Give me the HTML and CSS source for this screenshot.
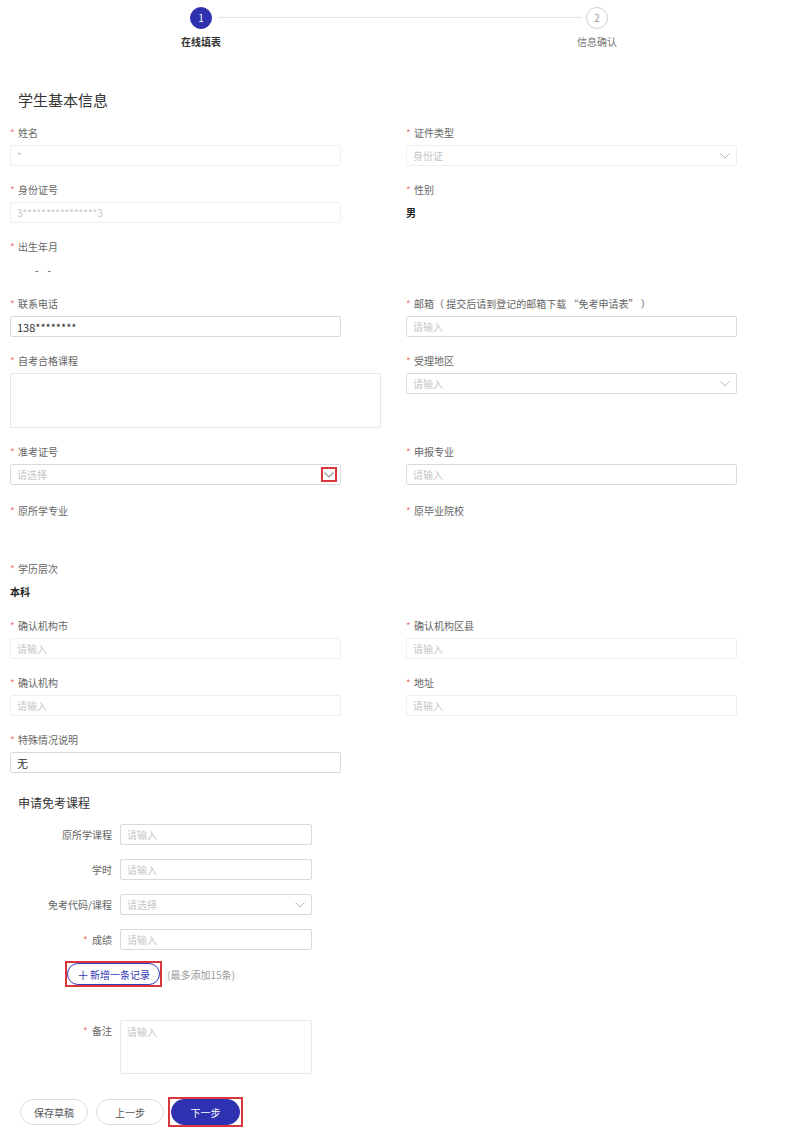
FILE: index.html
```html
<!DOCTYPE html>
<html lang="zh-CN">
<head>
<meta charset="utf-8">
<title>在线填表</title>
<link rel="stylesheet" href="styles.css">
</head>
<body>
<div class="page">
  <div class="stepper">
    <div class="step active"><div class="dot">1</div><div class="step-label">在线填表</div></div>
    <div class="connector"></div>
    <div class="step"><div class="dot">2</div><div class="step-label">信息确认</div></div>
  </div>

  <h2 class="section-title">学生基本信息</h2>

  <div class="form-grid">
    <div class="item">
      <div class="label"><span class="req">*</span>姓名</div>
      <div class="input disabled"><span class="ph">*</span></div>
    </div>
    <div class="item">
      <div class="label"><span class="req">*</span>证件类型</div>
      <div class="input disabled"><span class="ph">身份证</span><svg class="chev" viewBox="0 0 10 6"><path d="M0.5 0.5 L5 5 L9.5 0.5"/></svg></div>
    </div>

    <div class="item">
      <div class="label"><span class="req">*</span>身份证号</div>
      <div class="input disabled"><span class="ph">3****************3</span></div>
    </div>
    <div class="item">
      <div class="label"><span class="req">*</span>性别</div>
      <div class="value">男</div>
    </div>

    <div class="item">
      <div class="label"><span class="req">*</span>出生年月</div>
      <div class="value date">-&nbsp;&nbsp;&nbsp;&nbsp;-</div>
    </div>
    <div class="item"></div>

    <div class="item">
      <div class="label"><span class="req">*</span>联系电话</div>
      <div class="input"><span class="txt">138********</span></div>
    </div>
    <div class="item">
      <div class="label"><span class="req">*</span>邮箱（ 提交后请到登记的邮箱下载 “免考申请表” ）</div>
      <div class="input"><span class="ph">请输入</span></div>
    </div>

    <div class="item">
      <div class="label"><span class="req">*</span>自考合格课程</div>
      <div class="textarea wide"></div>
    </div>
    <div class="item">
      <div class="label"><span class="req">*</span>受理地区</div>
      <div class="input"><span class="ph">请输入</span><svg class="chev" viewBox="0 0 10 6"><path d="M0.5 0.5 L5 5 L9.5 0.5"/></svg></div>
    </div>

    <div class="item extra2">
      <div class="label"><span class="req">*</span>准考证号</div>
      <div class="input"><span class="ph">请选择</span><span class="arrow-hl"><svg class="chev hl" viewBox="0 0 10 6"><path d="M0.5 0.5 L5 5 L9.5 0.5"/></svg></span></div>
    </div>
    <div class="item extra2">
      <div class="label"><span class="req">*</span>申报专业</div>
      <div class="input"><span class="ph">请输入</span></div>
    </div>

    <div class="item extra1">
      <div class="label"><span class="req">*</span>原所学专业</div>
      <div class="value"></div>
    </div>
    <div class="item extra1">
      <div class="label"><span class="req">*</span>原毕业院校</div>
      <div class="value"></div>
    </div>

    <div class="item">
      <div class="label"><span class="req">*</span>学历层次</div>
      <div class="value">本科</div>
    </div>
    <div class="item"></div>

    <div class="item">
      <div class="label"><span class="req">*</span>确认机构市</div>
      <div class="input disabled"><span class="ph">请输入</span></div>
    </div>
    <div class="item">
      <div class="label"><span class="req">*</span>确认机构区县</div>
      <div class="input disabled"><span class="ph">请输入</span></div>
    </div>

    <div class="item">
      <div class="label"><span class="req">*</span>确认机构</div>
      <div class="input disabled"><span class="ph">请输入</span></div>
    </div>
    <div class="item">
      <div class="label"><span class="req">*</span>地址</div>
      <div class="input disabled"><span class="ph">请输入</span></div>
    </div>

    <div class="item last">
      <div class="label"><span class="req">*</span>特殊情况说明</div>
      <div class="input"><span class="txt">无</span></div>
    </div>
    <div class="item last"></div>
  </div>

  <div class="sub">
    <h3 class="sub-title">申请免考课程</h3>
    <div class="sub-form">
      <div class="sub-label">原所学课程</div>
      <div class="input small"><span class="ph">请输入</span></div>
      <div class="sub-label">学时</div>
      <div class="input small"><span class="ph">请输入</span></div>
      <div class="sub-label">免考代码/课程</div>
      <div class="input small"><span class="ph">请选择</span><svg class="chev" viewBox="0 0 10 6"><path d="M0.5 0.5 L5 5 L9.5 0.5"/></svg></div>
      <div class="sub-label"><span class="req">*</span>成绩</div>
      <div class="input small"><span class="ph">请输入</span></div>
    </div>

    <div class="add-row">
      <span class="hl-box"><span class="add-btn"><span class="plus">＋</span>新增一条记录</span></span>
      <span class="hint">(最多添加15条)</span>
    </div>

    <div class="sub-form remark">
      <div class="sub-label top"><span class="req">*</span>备注</div>
      <div class="textarea small"><span class="ph">请输入</span></div>
    </div>

    <div class="actions">
      <span class="btn">保存草稿</span>
      <span class="btn">上一步</span>
      <span class="hl-box next-wrap"><span class="btn primary">下一步</span></span>
    </div>
  </div>
</div>
</body>
</html>
```

FILE: styles.css
```css
* { box-sizing: border-box; }

body {
  margin: 0;
  background: #fff;
  color: #333;
  font-family: "Noto Sans CJK SC", "Noto Sans", sans-serif;
}

.page {
  width: 800px;
  min-height: 1139px;
  padding-bottom: 10px;
}

/* stepper */
.stepper {
  display: flex;
  margin-left: 179px;
  width: 440px;
  padding-top: 7px;
}
.step {
  width: 44px;
  display: flex;
  flex-direction: column;
  align-items: center;
}
.dot {
  width: 22px;
  height: 22px;
  border-radius: 50%;
  border: 1px solid #d0d0d0;
  color: #999;
  font-size: 10px;
  line-height: 20px;
  text-align: center;
  background: #fff;
}
.step.active .dot {
  background: #2e31ae;
  border-color: #2e31ae;
  color: #fff;
}
.step-label {
  margin-top: 6px;
  font-size: 10px;
  line-height: 14px;
  white-space: nowrap;
  color: #777;
}
.step.active .step-label {
  color: #333;
  font-weight: bold;
}
.connector {
  flex: 1;
  height: 1px;
  background: #e3e3e3;
  margin: 10px -7px 0 -5px;
}

.section-title {
  margin: 41px 0 0 18px;
  font-size: 15px;
  line-height: 20px;
  font-weight: normal;
  color: #333;
}

/* main form */
.form-grid {
  margin-top: 16px;
  padding-left: 10px;
  display: grid;
  grid-template-columns: 396px 331px;
  align-items: start;
}
.item {
  margin-bottom: 17px;
}
.item.extra2 { margin-bottom: 19px; }
.item.extra1 { margin-bottom: 18px; }
.item.last { margin-bottom: 0; }

.label {
  font-size: 10px;
  line-height: 14px;
  height: 14px;
  color: #666;
  white-space: nowrap;
  margin-bottom: 5px;
}
.req {
  display: inline-block;
  width: 8px;
  color: #f07c7c;
  font-size: 10px;
}

.input {
  width: 331px;
  height: 21px;
  border: 1px solid #dadada;
  border-radius: 2px;
  padding: 0 6px;
  display: flex;
  align-items: center;
  justify-content: space-between;
  font-size: 10px;
  background: #fff;
}
.input.disabled {
  border-color: #efefef;
}
.input.small {
  width: 192px;
}
.ph {
  color: #c6c6c6;
  font-size: 10px;
}
.txt {
  color: #333;
  font-size: 11px;
}
.chev {
  width: 10px;
  height: 6px;
  fill: none;
  stroke: #b8b8b8;
  stroke-width: 1;
}
.arrow-hl {
  width: 16px;
  height: 15px;
  border: 2px solid #d8363a;
  display: flex;
  align-items: center;
  justify-content: center;
  margin-right: -3px;
}
.chev.hl {
  width: 10px;
  height: 6px;
  stroke: #999;
  stroke-width: 1.2;
  flex: none;
}

.textarea {
  border: 1px solid #e8e8e8;
  border-radius: 2px;
  background: #fff;
}
.textarea.wide {
  width: 371px;
  height: 55px;
}

.value {
  height: 21px;
  line-height: 21px;
  font-size: 10px;
  font-weight: bold;
  color: #222;
}
.value.date {
  padding-left: 25px;
  font-weight: normal;
  color: #444;
}

/* sub section */
.sub {
  padding-left: 10px;
}
.sub-title {
  margin: 22px 0 13px 8px;
  font-size: 12px;
  line-height: 16px;
  font-weight: normal;
  color: #333;
}
.sub-form {
  display: grid;
  grid-template-columns: 102px 192px;
  column-gap: 8px;
  row-gap: 14px;
  align-items: center;
}
.sub-label {
  text-align: right;
  font-size: 10px;
  line-height: 14px;
  color: #666;
  white-space: nowrap;
}
.sub-label .req {
  width: 9px;
  text-align: left;
}
.sub-label.top {
  align-self: start;
  padding-top: 4px;
}

.add-row {
  margin-top: 11px;
  padding-left: 55px;
  display: flex;
  align-items: center;
}
.hl-box {
  display: inline-flex;
  border: 2px solid #d8363a;
}
.add-btn {
  display: inline-flex;
  align-items: center;
  justify-content: center;
  width: 93px;
  height: 22px;
  border: 1px solid #3a3dbb;
  border-radius: 11px;
  font-size: 10px;
  color: #3336b2;
  background: #fff;
}
.plus {
  font-size: 12px;
  margin-right: 1px;
}
.hint {
  margin-left: 5px;
  font-size: 10px;
  color: #999;
}

.remark {
  margin-top: 33px;
}
.textarea.small {
  width: 192px;
  height: 54px;
  padding: 1px 6px;
  line-height: 14px;
}

.actions {
  margin-top: 23px;
  padding-left: 10px;
  display: flex;
  align-items: center;
}
.btn {
  display: inline-flex;
  align-items: center;
  justify-content: center;
  width: 68px;
  height: 26px;
  border: 1px solid #dcdcdc;
  border-radius: 13px;
  font-size: 10px;
  color: #555;
  background: #fff;
}
.btn + .btn {
  margin-left: 8px;
}
.next-wrap {
  margin-left: 4px;
  padding: 0 1px;
}
.btn.primary {
  width: 69px;
  background: #2e31b0;
  border-color: #2e31b0;
  color: #fff;
}
```
